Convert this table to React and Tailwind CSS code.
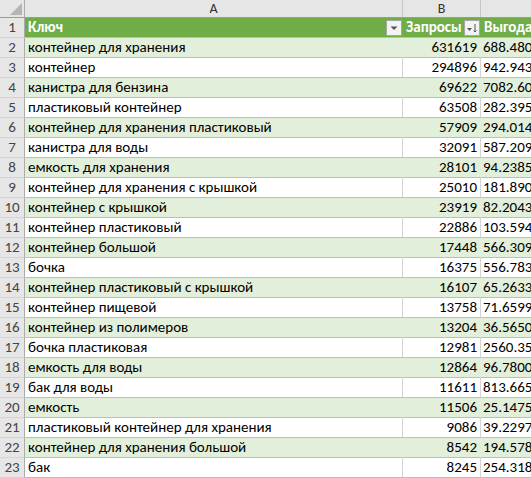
import React from 'react';

const rows = [
  ['контейнер для хранения', 631619, '688.4806'],
  ['контейнер', 294896, '942.9436'],
  ['канистра для бензина', 69622, '7082.604'],
  ['пластиковый контейнер', 63508, '282.3953'],
  ['контейнер для хранения пластиковый', 57909, '294.0146'],
  ['канистра для воды', 32091, '587.2093'],
  ['емкость для хранения', 28101, '94.23857'],
  ['контейнер для хранения с крышкой', 25010, '181.8906'],
  ['контейнер с крышкой', 23919, '82.20433'],
  ['контейнер пластиковый', 22886, '103.5946'],
  ['контейнер большой', 17448, '566.3096'],
  ['бочка', 16375, '556.7834'],
  ['контейнер пластиковый с крышкой', 16107, '65.26337'],
  ['контейнер пищевой', 13758, '71.65994'],
  ['контейнер из полимеров', 13204, '36.56503'],
  ['бочка пластиковая', 12981, '2560.353'],
  ['емкость для воды', 12864, '96.78003'],
  ['бак для воды', 11611, '813.6656'],
  ['емкость', 11506, '25.14753'],
  ['пластиковый контейнер для хранения', 9086, '39.22973'],
  ['контейнер для хранения большой', 8542, '194.5783'],
  ['бак', 8245, '254.3184'],
];

function FilterBtn({ sorted }) {
  return (
    <div className="w-[16px] h-[16px] border border-[#a6a6a6] bg-[#f3f3f3] flex items-center justify-center shrink-0">
      {sorted ? (
        <svg width="12" height="12" viewBox="0 0 12 12">
          <path d="M1 6h5l-2.5 3z" fill="#555" />
          <path d="M9 2v8M7.5 8.5L9 10l1.5-1.5" stroke="#555" strokeWidth="1" fill="none" />
        </svg>
      ) : (
        <svg width="10" height="10" viewBox="0 0 10 10">
          <path d="M1.5 3.5h7L5 7z" fill="#555" />
        </svg>
      )}
    </div>
  );
}

function RowNum({ n }) {
  return (
    <div className="w-[25px] shrink-0 h-full bg-[#e6e6e6] border-r border-[#ababab] border-b border-b-[#d4d4d4] flex items-center justify-center text-[#444]">
      {n}
    </div>
  );
}

export default function App() {
  return (
    <div className="w-[531px] h-[478px] overflow-hidden bg-white text-black text-[15px] leading-none" style={{ fontFamily: 'Carlito, "Liberation Sans", sans-serif' }}>
      {/* буквы столбцов */}
      <div className="flex h-[18px] bg-[#e6e6e6] border-b border-[#9b9b9b] text-[#333] text-[14px]">
        <div className="w-[25px] shrink-0 border-r border-[#ababab] relative">
          <svg className="absolute right-[2px] bottom-[2px]" width="12" height="12" viewBox="0 0 12 12">
            <path d="M12 0V12H0z" fill="#b4b4b4" />
          </svg>
        </div>
        <div className="w-[378px] shrink-0 border-r border-[#c6c6c6] flex items-center justify-center">A</div>
        <div className="w-[78px] shrink-0 border-r border-[#c6c6c6] flex items-center justify-center">B</div>
        <div className="flex-1" />
      </div>

      {/* заголовок таблицы */}
      <div className="flex h-[20px]">
        <RowNum n={1} />
        <div className="w-[378px] shrink-0 bg-[#70ad47] border-b border-[#a9d08e] flex items-center justify-between pl-[3px] pr-[1px] text-white font-bold">
          <span>Ключ</span>
          <FilterBtn />
        </div>
        <div className="w-[78px] shrink-0 bg-[#70ad47] border-b border-[#a9d08e] flex items-center justify-between pl-[3px] pr-[1px] text-white font-bold">
          <span>Запросы</span>
          <FilterBtn sorted />
        </div>
        <div className="flex-1 bg-[#70ad47] border-b border-[#a9d08e] flex items-center pl-[3px] text-white font-bold whitespace-nowrap overflow-hidden">
          Выгода
        </div>
      </div>

      {rows.map((r, i) => {
        const band = i % 2 === 0;
        const bg = band ? 'bg-[#e2efda]' : 'bg-white';
        const vline = band ? 'border-r-transparent' : 'border-r-[#d4d4d4]';
        return (
          <div key={i} className="flex h-[20px]">
            <RowNum n={i + 2} />
            <div className={`w-[378px] shrink-0 ${bg} border-b border-b-[#a9d08e] border-r ${vline} flex items-center pl-[3px] whitespace-nowrap overflow-hidden`}>
              {r[0]}
            </div>
            <div className={`w-[78px] shrink-0 ${bg} border-b border-b-[#a9d08e] border-r ${vline} flex items-center justify-end pr-[3px]`}>
              {r[1]}
            </div>
            <div className={`flex-1 ${bg} border-b border-b-[#a9d08e] flex items-center pl-[2px] whitespace-nowrap overflow-hidden`}>
              {r[2]}
            </div>
          </div>
        );
      })}
    </div>
  );
}
